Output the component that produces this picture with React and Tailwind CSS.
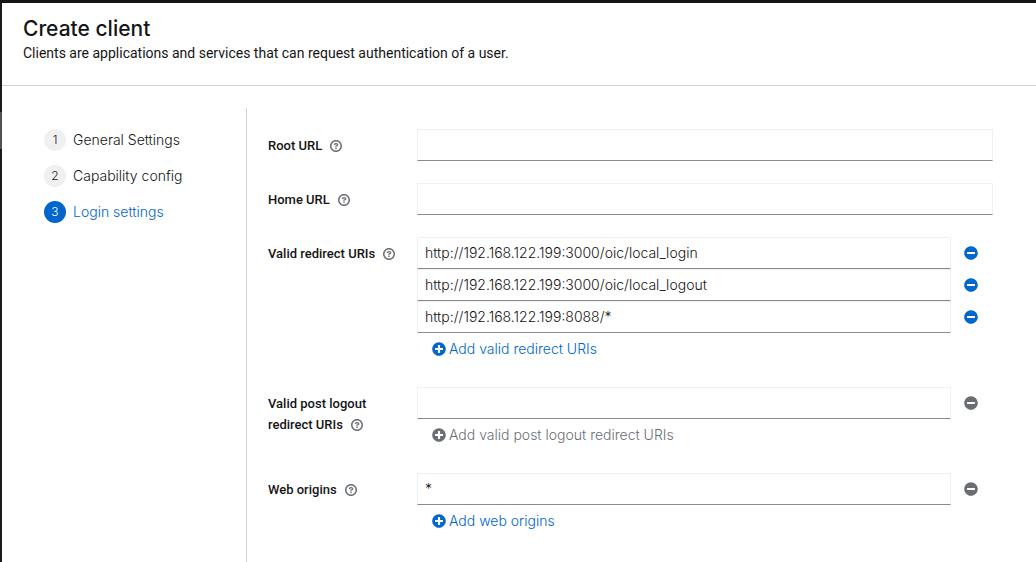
import React from "react";
import { FaMinusCircle, FaPlusCircle } from "react-icons/fa";

const steps = ["General Settings", "Capability config", "Login settings"];

function HelpIcon() {
  return (
    <svg viewBox="0 0 1024 1024" className="size-3" fill="currentColor" aria-hidden="true">
      <path d="M521.3 576C627.5 576 713.7 502 713.7 413.7S627.6 253.6 521.3 253.6C366 253.6 334.5 337.7 329.2 407.2C329.2 414.3 335.2 416 343.5 416H445C450.5 416 458 415.5 460.8 406.5C460.8 362.6 582.9 357.1 582.9 413.6C582.9 441.9 556.2 470.9 521.3 473S447.3 479.8 447.3 521.7V553.8C447.3 570.8 456.1 576 472 576H521.3M575.3 751.3V655.3A16 16 0 0 0 559.3 639.3H463.3A16 16 0 0 0 447.3 655.3V751.3A16 16 0 0 0 463.3 767.3H559.3A16 16 0 0 0 575.3 751.3M512 896C300.2 896 128 723.9 128 512C128 300.3 300.2 128 512 128S896 300.2 896 512S723.7 896 512 896M512.1 0C229.7 0 0 229.8 0 512S229.8 1024 512.1 1024S1024 794.3 1024 512S794.4 0 512.1 0" />
    </svg>
  );
}

function Field({ id, label, children }) {
  return (
    <div className="flex items-start">
      <div className="w-[149px] shrink-0 pt-[6px] pr-4 font-['Roboto',sans-serif] text-[13px] leading-[21px] font-medium text-[#151515]">
        <label htmlFor={id}>{label}</label>
        <button type="button" aria-label={`Help for ${label}`} className="ml-2 inline-flex align-[-2px] text-[#6a6e73]">
          <HelpIcon />
        </button>
      </div>
      <div className="min-w-0 flex-1">{children}</div>
    </div>
  );
}

function TextInput({ id, value = "", label }) {
  return (
    <input
      id={id}
      type="text"
      defaultValue={value}
      aria-label={label}
      className="block h-8 w-full min-w-0 flex-1 border border-[#f0f0f0] border-b-[#8a8d90] bg-white px-[7px] pb-px text-sm text-[#151515] outline-none"
    />
  );
}

function MultiLine({ id, values, label, addLabel, canRemove = false, canAdd = true }) {
  return (
    <>
      {values.map((value, i) => (
        <div key={i} className="flex">
          <TextInput id={i === 0 ? id : `${id}-${i}`} value={value} label={i === 0 ? undefined : `${label} ${i + 1}`} />
          <button
            type="button"
            aria-label="Remove"
            disabled={!canRemove}
            className="flex w-[42px] items-center justify-start pl-[13px] text-sm text-[#0066cc] disabled:text-[#6a6e73]"
          >
            <FaMinusCircle />
          </button>
        </div>
      ))}
      <button
        type="button"
        disabled={!canAdd}
        className="flex h-8 items-center gap-[3px] pl-[15px] text-sm text-[#0066cc] disabled:text-[#6a6e73]"
      >
        <FaPlusCircle />
        {addLabel}
      </button>
    </>
  );
}

export default function App() {
  return (
    <div className="flex min-h-screen border-t-[3px] border-[#151515] bg-white font-['Inter',sans-serif] font-light text-[#151515]">
      <div className="flex w-[2px] shrink-0 flex-col bg-[#151a1f]">
        <div className="mt-[109px] h-[37px] bg-[#4f5255]" />
      </div>
      <div className="flex min-w-0 flex-1 flex-col">
        <header className="border-b border-[#d2d2d2] px-[21px] pt-3 pb-[21px]">
          <h1 className="text-[21px] leading-7 font-medium">Create client</h1>
          <p className="font-['Roboto',sans-serif] text-sm leading-[21px] font-normal">
            Clients are applications and services that can request authentication of a user.
          </p>
        </header>
        <div className="flex flex-1 pt-[22px]">
          <nav aria-label="Steps" className="w-[245px] shrink-0 border-r border-[#d2d2d2] pt-[21px] pl-[42px]">
            <ol className="flex flex-col gap-[14px]">
              {steps.map((step, i) => (
                <li key={step}>
                  <button
                    type="button"
                    aria-current={i === 2 ? "step" : undefined}
                    className="group flex items-center gap-[7px] text-sm leading-[22px] aria-[current=step]:text-[#0066cc]"
                  >
                    <span className="flex size-[22px] items-center justify-center rounded-full bg-[#f0f0f0] text-xs text-[#151515] group-aria-[current=step]:bg-[#0066cc] group-aria-[current=step]:text-white">
                      {i + 1}
                    </span>
                    {step}
                  </button>
                </li>
              ))}
            </ol>
          </nav>
          <form className="flex min-w-0 flex-1 flex-col gap-[22px] pt-[21px] pr-[43px] pl-[21px]">
            <Field id="root" label="Root URL">
              <TextInput id="root" />
            </Field>
            <Field id="home" label="Home URL">
              <TextInput id="home" />
            </Field>
            <Field id="redirect" label="Valid redirect URIs">
              <MultiLine
                id="redirect"
                label="Valid redirect URIs"
                values={[
                  "http://192.168.122.199:3000/oic/local_login",
                  "http://192.168.122.199:3000/oic/local_logout",
                  "http://192.168.122.199:8088/*",
                ]}
                addLabel="Add valid redirect URIs"
                canRemove
              />
            </Field>
            <Field id="logout" label="Valid post logout redirect URIs">
              <MultiLine
                id="logout"
                label="Valid post logout redirect URIs"
                values={[""]}
                addLabel="Add valid post logout redirect URIs"
                canAdd={false}
              />
            </Field>
            <Field id="origins" label="Web origins">
              <MultiLine id="origins" label="Web origins" values={["*"]} addLabel="Add web origins" />
            </Field>
          </form>
        </div>
      </div>
    </div>
  );
}
